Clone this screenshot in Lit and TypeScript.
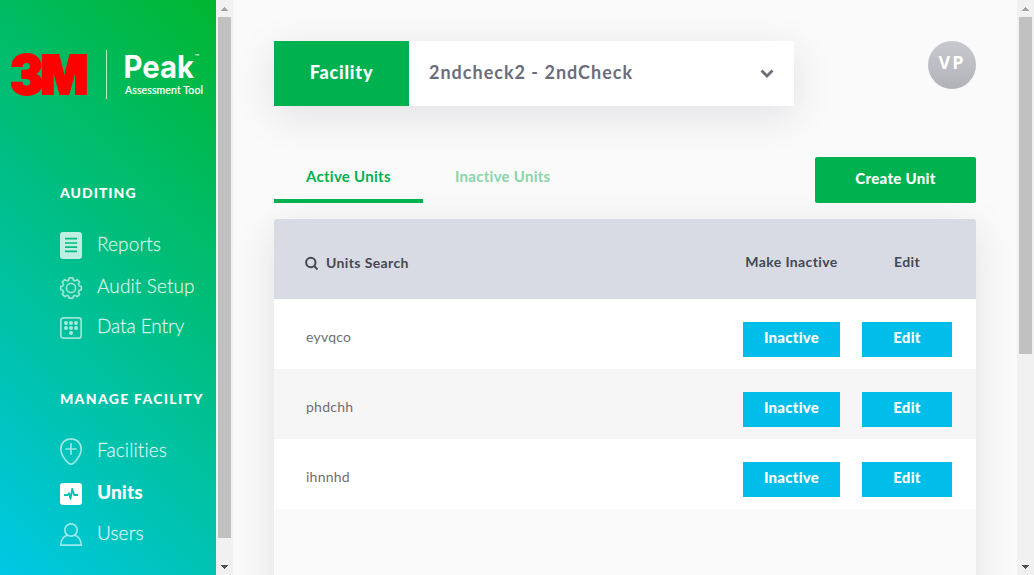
import { LitElement, html, css, svg, TemplateResult } from "lit";
import { customElement, property } from "lit/decorators.js";

const icons: Record<string, TemplateResult> = {
  reports: svg`<rect x="0" y="0" width="22" height="27" rx="3" fill="#fff" fill-opacity=".75"/>
    <path d="M5 6.700h12M5 11h12M5 15.200h12M5 19.400h12" stroke="#00bd80" stroke-width="1.700"/>`,
  setup: svg`<g fill="none" stroke="#fff" stroke-opacity=".6" stroke-width="1.700" stroke-linejoin="round">
    <circle cx="11" cy="11" r="4.600"/>
    <path d="M9.200.8h3.600l.5 2.300 1.900.8 2-1.300 2.500 2.500-1.300 2 .8 1.900 2.100.4v3.400l-2.100.5-.8 1.900 1.300 2-2.500 2.500-2-1.300-1.900.8-.5 2H9.200l-.5-2-1.900-.8-2 1.300-2.500-2.500 1.300-2-.8-1.900-2-.5V9.400l2-.4.8-1.900-1.300-2 2.500-2.500 2 1.300 1.900-.8z"/></g>`,
  entry: svg`<rect x=".85" y=".85" width="20.300" height="20.300" rx="2.500" fill="none" stroke="#fff" stroke-opacity=".6" stroke-width="1.700"/>
    <g fill="#fff" fill-opacity=".65">${[6, 11, 16].map((x) => svg`<circle cx=${x} cy="6" r="2"/><circle cx=${x} cy="11" r="2"/>`)}<circle cx="11" cy="16" r="2"/></g>`,
  facilities: svg`<g fill="none" stroke="#fff" stroke-opacity=".6" stroke-width="1.700">
    <path d="M11 .8C5.300.8.8 5.200.8 11c0 6.500 7.200 15.200 10.200 15.200S21.200 17.500 21.200 11C21.200 5.200 16.700.8 11 .8z"/><path d="M11 5.300v11.400M5.300 11h11.400"/></g>`,
  units: svg`<rect width="22" height="22" rx="3" fill="#fff"/>
    <path d="M4 12h3.700l1.300-1.800 1.500 5.600L12.200 6l1.900 6H18" fill="none" stroke="#00c2b0" stroke-width="1.800" stroke-linejoin="round"/>`,
  users: svg`<g fill="none" stroke="#fff" stroke-opacity=".6" stroke-width="1.700"><circle cx="11" cy="7" r="6.200"/>
    <path d="M7.300 12.200C3.500 13.500.8 17 .8 22.200h20.400c0-5.200-2.700-8.700-6.500-10"/></g>`,
};

@customElement("scroll-track")
class ScrollTrack extends LitElement {
  @property({ type: Number }) thumb = 0;
  static styles = css`
    :host { display: flex; flex-direction: column; width: 17px; height: 100%; background: #f1f1f1; flex: none; }
    .arrow { display: flex; align-items: center; justify-content: center; height: 17px; flex: none; }
    .thumb { background: #c1c1c1; margin: 0 2px; }
    .space { flex: 1; }
    svg { display: block; }
  `;
  render() {
    return html`
      <div class="arrow"><svg width="7" height="4" viewBox="0 0 7 4" shape-rendering="crispEdges"><path d="M0 4 3.500 0 7 4z" fill="#a3a3a3"/></svg></div>
      <div class="thumb" style="height:${this.thumb}px"></div>
      <div class="space"></div>
      <div class="arrow"><svg width="7" height="4" viewBox="0 0 7 4" shape-rendering="crispEdges"><path d="M0 0h7L3.500 4z" fill="#505050"/></svg></div>`;
  }
}

@customElement("app-root")
class AppRoot extends LitElement {
  static styles = css`
    :host { display: flex; width: 100%; height: 575px; overflow: hidden; background: #fafafa; font-family: Lato, "Open Sans", sans-serif; font-variant-ligatures: none; }
    * { box-sizing: border-box; }
    .side { width: 216px; flex: none; background: linear-gradient(45deg, #00c8e6 0%, #00b62f 100%); color: #fff; overflow: hidden; }
    .logo { display: block; margin-top: 40px; }
    .group { padding-left: 60px; white-space: nowrap; }
    .audit { padding-top: 73px; }
    .manage { padding-top: 43px; }
    .title { font-size: 14px; font-weight: 900; line-height: 20px; letter-spacing: 1px; }
    .manage .title { letter-spacing: 1.300px; }
    .nav { display: grid; grid-template-columns: 22px 1fr; column-gap: 15px; align-items: center; height: 41px; font-size: 19px; font-weight: 300; color: rgba(255,255,255,.8); -webkit-text-stroke: .3px rgba(255,255,255,.7); letter-spacing: .12px; }
    .title + .nav { margin-top: 20px; }
    .nav.setup { margin: 1px 0 -1px; }
    .nav.entry { letter-spacing: -.08px; }
    .nav svg { overflow: visible; display: block; margin-top: 4px; }
    .nav.units svg, .nav.users svg { margin-top: 6px; }
    .nav.units span, .nav.users span { margin-top: 2px; }
    .nav.active { font-weight: 900; color: #fff; -webkit-text-stroke: 0; }
    .main { flex: 1; min-width: 0; padding: 41px 41px 0; height: 575px; overflow: hidden; }
    .top { display: flex; justify-content: space-between; align-items: flex-start; }
    .picker { display: flex; width: 520px; height: 65px; background: #fff; box-shadow: 0 10px 40px rgba(50,50,80,.12); }
    .tag { width: 135px; background: #00b14f; color: #fff; font-size: 18px; font-weight: 900; text-align: center; line-height: 62px; letter-spacing: .8px; }
    .value { flex: 1; padding-left: 20px; color: #6b6d7a; font-size: 18px; font-weight: 700; line-height: 62px; letter-spacing: 1px; }
    .chev { display: block; margin: 28px 20px 0 0; }
    .avatar { width: 48px; height: 48px; border-radius: 50%; background: linear-gradient(#c8c8cf, #b2b2b9); color: #fff; font: 700 18px/43px "Open Sans", sans-serif; letter-spacing: 2px; text-align: center; }
    .tabs { display: flex; height: 46px; margin-top: 51px; }
    .tab { width: 149px; padding-left: 32px; line-height: 39px; font-size: 15px; font-weight: 700; color: #8ad5a9; white-space: nowrap; letter-spacing: .27px; }
    .tab.on { color: #00b14f; border-bottom: 4px solid #00b14f; }
    .create { margin-left: auto; width: 161px; background: #00b14f; color: #fff; border-radius: 2px; text-align: center; font-size: 15px; font-weight: 900; line-height: 43px; letter-spacing: .3px; }
    .table { margin-top: 16px; height: 460px; background: #fafafa; border-radius: 3px; box-shadow: 0 10px 40px rgba(50,50,80,.12); overflow: hidden; }
    .row { display: grid; grid-template-columns: 1fr 97px 90px; column-gap: 22px; height: 70px; padding: 0 24px 0 32px; background: #fff; align-items: center; font-size: 14px; letter-spacing: .25px; color: #6f6f72; }
    .row:nth-child(odd) { background: #f6f6f6; }
    .row.head { height: 80px; background: #d8dbe3; color: #454754; font-weight: 700; text-align: center; padding-top: 5px; padding-left: 31px; letter-spacing: .38px; }
    .search { display: flex; align-items: center; gap: 8px; padding-top: 2px; }
    .name { margin-top: 5px; }
    .btn { height: 35px; margin-top: 11px; background: #00bde9; color: #fff; font-size: 15px; font-weight: 900; line-height: 31px; text-align: center; }
  `;

  nav(icon: string, h: number, label: string, active = false) {
    return html`<div class="nav ${icon} ${active ? "active" : ""}"><svg width="22" height=${h} viewBox="0 0 22 ${h}">${icons[icon]}</svg><span>${label}</span></div>`;
  }

  render() {
    return html`
      <div class="side">
        <svg class="logo" width="216" height="70" viewBox="0 40 216 70">
          <text x="10" y="94" font-family="Inter" font-weight="900" font-size="53" letter-spacing="-3" fill="#f00" stroke="#f00" stroke-width="2" textLength="75.500" lengthAdjust="spacingAndGlyphs">3M</text>
          <path d="M106.500 50v49" stroke="#fff" stroke-opacity=".7"/>
          <text x="123.500" y="78" font-family="Inter" font-weight="700" font-size="31" fill="#fff" textLength="70.500" lengthAdjust="spacingAndGlyphs">Peak</text>
          <text x="194.500" y="58" font-family="Lato" font-size="6" fill="#fff">™</text>
          <text x="125" y="94" font-family="Lato" font-weight="400" font-size="10.500" fill="#fff" stroke="#fff" stroke-width=".2" textLength="78">Assessment Tool</text>
        </svg>
        <div class="group audit">
          <div class="title">AUDITING</div>
          ${this.nav("reports", 27, "Reports")}${this.nav("setup", 22, "Audit Setup")}${this.nav("entry", 22, "Data Entry")}
        </div>
        <div class="group manage">
          <div class="title">MANAGE FACILITY</div>
          ${this.nav("facilities", 27, "Facilities")}${this.nav("units", 22, "Units", true)}${this.nav("users", 23, "Users")}
        </div>
      </div>
      <scroll-track .thumb=${521}></scroll-track>
      <div class="main">
        <div class="top">
          <div class="picker">
            <div class="tag">Facility</div>
            <div class="value">2ndcheck2 - 2ndCheck</div>
            <svg class="chev" width="14" height="9" viewBox="0 0 14 9"><path d="m1.500 1.500 5.500 5.500 5.500-5.500" fill="none" stroke="#6b6d7a" stroke-width="2.800"/></svg>
          </div>
          <div class="avatar">VP</div>
        </div>
        <div class="tabs">
          <div class="tab on">Active Units</div>
          <div class="tab">Inactive Units</div>
          <div class="create">Create Unit</div>
        </div>
        <div class="table">
          <div class="row head">
            <div class="search"><svg width="13" height="14" viewBox="0 0 13 14"><g fill="none" stroke="#454754" stroke-width="2"><circle cx="5.800" cy="6.500" r="4.700"/><path d="m9.100 9.900 3.400 3.600"/></g></svg><span>Units Search</span></div>
            <span>Make Inactive</span><span>Edit</span>
          </div>
          ${["eyvqco", "phdchh", "ihnnhd"].map((n) => html`<div class="row"><span class="name">${n}</span><div class="btn">Inactive</div><div class="btn">Edit</div></div>`)}
        </div>
      </div>
      <scroll-track .thumb=${337}></scroll-track>`;
  }
}
